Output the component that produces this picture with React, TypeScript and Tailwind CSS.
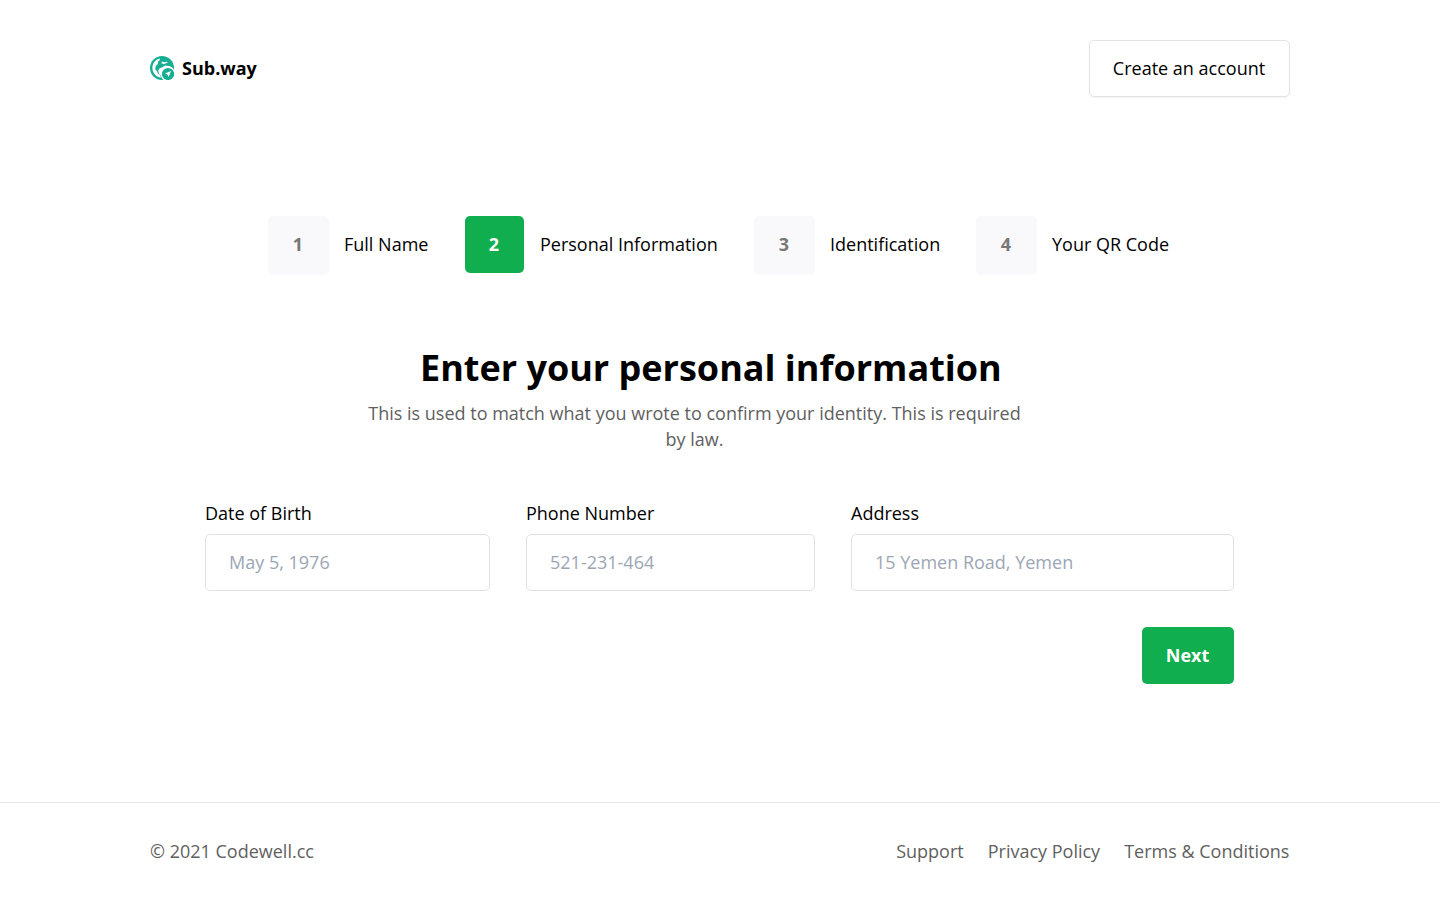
const steps = [
  { label: 'Full Name', box: 'w-[61px] h-[59px] bg-[#f9f9fb] text-[#777777] pr-px', item: 'w-[197px]' },
  { label: 'Personal Information', box: 'w-[59px] h-[57px] bg-[#11ae50] text-white pr-px', item: 'w-[289px]' },
  { label: 'Identification', box: 'w-[61px] h-[59px] bg-[#f9f9fb] text-[#777777] pr-px', item: 'w-[222px]' },
  { label: 'Your QR Code', box: 'w-[61px] h-[59px] bg-[#f9f9fb] text-[#777777] pr-px', item: 'w-[200px]' },
];

const fields = [
  { label: 'Date of Birth', placeholder: 'May 5, 1976', width: 'w-[285px]' },
  { label: 'Phone Number', placeholder: '521-231-464', width: 'w-[289px]' },
  { label: 'Address', placeholder: '15 Yemen Road, Yemen', width: 'w-[383px]' },
];

function Logo() {
  return (
    <svg className="mb-0.5" width="24" height="24" viewBox="0 0 24 24" fill="none" aria-hidden="true">
      <circle cx="12" cy="12" r="12" fill="#15ae92" />
      <path
        d="M9.6 2.5C5.4 3.5 2.4 7.4 2.4 12c0 4.4 2.8 8.1 6.8 9.3l1.6.4-.6-2.8-2.3-1.4-.9-2.6-1.8-1.6.5-3 2.1-2.2.3-2.5 1.8-1.5z"
        fill="#fff"
      />
      <path d="M11 6.9l1.5-1.4 1.8.7 2.5-.4 1 1-2.6.6-1.5.9-1.3-.7z" fill="#fff" />
      <path d="M8.2 14.6l1.5-2.3 2.7-1.1 2.6-1.6 4.4.4 3.5 2v2.2l-6.3-.4-4.2 2.4-1.3 3.6-1.9-1.6z" fill="#fff" />
      <circle cx="18" cy="18" r="7.4" fill="#fff" />
      <circle cx="18" cy="18" r="6.1" fill="#15ae92" />
      <path d="M21 15.1l-2.3 5.8-1.2-2.5-2.5-1z" fill="#fff" />
    </svg>
  );
}

export default function App() {
  return (
    <div className="flex h-[900px] w-[1440px] flex-col bg-white font-['Open_Sans','Noto_Sans',sans-serif] text-[18px] leading-[25px] text-black">
      <header className="flex items-center justify-between px-[150px] pt-10">
        <a className="flex items-center gap-2 font-bold">
          <Logo />
          Sub.way
        </a>
        <button className="h-[57px] w-[201px] rounded-[5px] border border-[#e3e3e6] pr-px shadow-[0_1px_2px_rgba(0,0,0,0.05)]">
          Create an account
        </button>
      </header>

      <main className="flex h-[705px] flex-col">
        <ol className="mt-[119px] ml-[268px] flex items-start">
          {steps.map((step, i) => (
            <li key={step.label} className={`flex shrink-0 items-start whitespace-nowrap ${step.item}`}>
              <span className={`flex shrink-0 justify-center rounded-[5px] pt-4 font-bold ${step.box}`}>{i + 1}</span>
              <span className={i === 1 ? 'pt-4 pl-4' : 'pt-4 pl-[15px]'}>{step.label}</span>
            </li>
          ))}
        </ol>

        <h1 className="mt-[68px] ml-[420px] text-[36px] leading-[50px] font-bold">Enter your personal information</h1>
        <p className="mt-[7px] ml-[360px] w-[669px] text-center leading-[26px] text-[#5f5f5f]">
          This is used to match what you wrote to confirm your identity. This is required by law.
        </p>

        <form className="mt-[49px] ml-[205px] w-[1029px]">
          <div className="flex gap-9">
            {fields.map((field) => (
              <label key={field.label} className={`flex flex-col gap-2 ${field.width}`}>
                <span>{field.label}</span>
                <input
                  placeholder={field.placeholder}
                  className="h-[57px] w-full rounded-[5px] border border-[#e2e2e4] px-[23px] pb-0.5 placeholder:text-[#9ca6b5]"
                />
              </label>
            ))}
          </div>
          <div className="mt-9 flex justify-end">
            <button type="button" className="h-[57px] w-[92px] rounded-[5px] bg-[#11ae50] pr-px font-bold text-white">
              Next
            </button>
          </div>
        </form>
      </main>

      <footer className="flex h-[98px] items-center justify-between border-t border-[#e4e4e6] px-[150px] text-[#5f5f5f]">
        <span>© 2021 Codewell.cc</span>
        <nav className="flex gap-6 pr-[0.6px]">
          <a>Support</a>
          <a>Privacy Policy</a>
          <a>Terms &amp; Conditions</a>
        </nav>
      </footer>
    </div>
  );
}
